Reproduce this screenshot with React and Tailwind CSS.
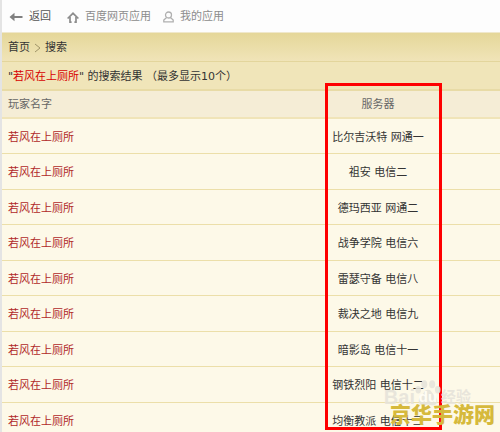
import React from 'react';

const results = [
  { player: '若风在上厕所', server: '比尔吉沃特 网通一' },
  { player: '若风在上厕所', server: '祖安 电信二' },
  { player: '若风在上厕所', server: '德玛西亚 网通二' },
  { player: '若风在上厕所', server: '战争学院 电信六' },
  { player: '若风在上厕所', server: '雷瑟守备 电信八' },
  { player: '若风在上厕所', server: '裁决之地 电信九' },
  { player: '若风在上厕所', server: '暗影岛 电信十一' },
  { player: '若风在上厕所', server: '钢铁烈阳 电信十二' },
  { player: '若风在上厕所', server: '均衡教派 电信十三' },
];

const BackIcon = () => (
  <svg width="14" height="10" viewBox="0 0 14 10" fill="#808080" aria-hidden="true">
    <path d="M5.5 0.8V4H13.5V6H5.5V9.2L0.5 5z" />
  </svg>
);

const HomeIcon = () => (
  <svg width="12" height="11" viewBox="0 0 12 11" fill="none" stroke="#8c8c8c" strokeWidth="1.7" aria-hidden="true">
    <path d="M0.6 6.5L6 1.3L11.4 6.5" />
    <path d="M3 5V10.2H4.6M9 5V10.2H7.4" />
  </svg>
);

const UserIcon = () => (
  <svg width="11" height="12" viewBox="0 0 11 12" fill="none" stroke="#b0b0b0" strokeWidth="1.3" aria-hidden="true">
    <circle cx="5.5" cy="4" r="3" />
    <path d="M3.6 6.5L0.8 9V10.8H10.2V9L7.4 6.5" />
  </svg>
);

const PawIcon = () => (
  <svg width="26" height="28" viewBox="0 0 28 29" fill="currentColor" aria-hidden="true">
    <ellipse cx="3.5" cy="11" rx="3" ry="4" />
    <ellipse cx="10" cy="5" rx="3.2" ry="4.3" />
    <ellipse cx="18.5" cy="5" rx="3.2" ry="4.3" />
    <ellipse cx="24.5" cy="11" rx="3" ry="4" />
    <path d="M14 11C10.5 11 9.5 15 6.5 18C2 22 4 28 9 28C11.5 28 12 27 14 27S16.5 28 19 28C24 28 26 22 21.5 18C18.5 15 17.5 11 14 11z" />
  </svg>
);

const NavBar = () => (
  <nav className="flex h-8 items-center bg-[#fdfdfd] pt-0.5 pl-[7px] text-[#8c8c8c]">
    <a href="#back" className="flex items-center gap-1.5 text-[#555555]">
      <BackIcon />
      返回
    </a>
    <a href="#home" className="ml-4 flex items-center gap-1.5">
      <HomeIcon />
      百度网页应用
    </a>
    <a href="#mine" className="ml-3 flex items-center gap-1.5">
      <UserIcon />
      我的应用
    </a>
  </nav>
);

const ResultTable = () => (
  <table className="w-full table-fixed border-collapse">
    <thead>
      <tr className="h-[27px] border-b-2 border-[#f0e4b8] bg-[#f5edd6] text-[#666666]">
        <th scope="col" className="w-[51%] pt-0.5 pl-1.5 text-left font-normal">玩家名字</th>
        <th scope="col" className="pt-0.5 text-center font-normal">服务器</th>
      </tr>
    </thead>
    <tbody>
      {results.map((row, i) => (
        <tr key={i} className="h-9 border-b border-[#ecdfa9] odd:h-[35px]">
          <td className="pt-1 pl-1.5">
            <a href="#player" className="text-[#b02828]">{row.player}</a>
          </td>
          <td className="pt-1 text-center text-[#333333]">{row.server}</td>
        </tr>
      ))}
    </tbody>
  </table>
);

export default function App() {
  return (
    <div
      className="relative h-screen overflow-hidden border-l-2 border-[#e4e4e4] bg-[#fdf9e8] text-[11px] leading-4 text-[#333333]"
      style={{ fontFamily: '"DejaVu Sans", "Noto Sans CJK SC", sans-serif' }}
    >
      <NavBar />
      <div className="flex h-[30px] items-center gap-1 border-y border-t-[#f0e8cc] border-b-[#e3d59c] bg-linear-to-b from-[#e5d799] to-[#f0e4b8] pt-0.5 pl-1.5">
        <a href="#index">首页</a>
        <svg width="7" height="10" viewBox="0 0 7 10" fill="none" stroke="#a09468" aria-hidden="true">
          <path d="M1 1L6 5L1 9" />
        </svg>
        <span>搜索</span>
      </div>
      <h1 className="flex h-[29px] items-center border-b-2 border-[#e8dba6] bg-[#f0e5b9] pt-0.5 pl-1.5">
        <span>
          &quot;<span className="text-[#d80000]">若风在上厕所</span>&quot; 的搜索结果 （最多显示10个）
        </span>
      </h1>
      <ResultTable />

      {/* highlight around the server column */}
      <div className="absolute top-[83px] left-[323px] h-[347px] w-[117px] border-3 border-[#fe0000]" />

      {/* watermarks */}
      <div
        className="absolute right-[29px] bottom-[25px] flex items-end font-bold text-[#e6e3da]/90"
        style={{ fontFamily: '"Liberation Sans", "Noto Sans CJK SC", sans-serif' }}
      >
        <span className="text-[20px] leading-5">Bai</span>
        <span className="relative">
          <PawIcon />
          <span className="absolute inset-x-0 bottom-0 text-center text-[15px] leading-5 text-[#fffdf4]">du</span>
        </span>
        <span className="text-[15px] leading-5">经验</span>
      </div>
      <div className="absolute right-[5px] bottom-[5px] text-[21px] leading-6 font-black text-[#d6b93c]">
        京华手游网
      </div>
    </div>
  );
}
